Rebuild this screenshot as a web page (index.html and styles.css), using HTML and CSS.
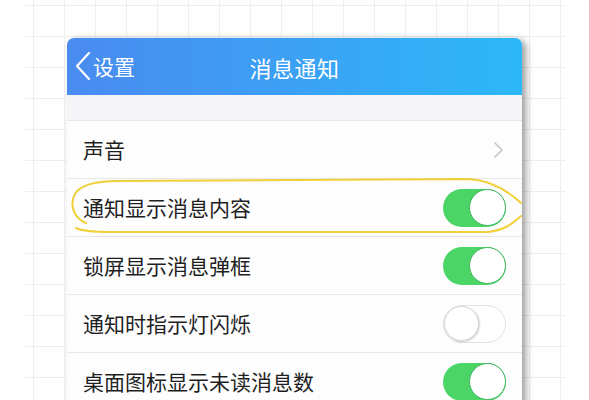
FILE: index.html
```html
<!DOCTYPE html>
<html lang="zh-CN">
<head>
<meta charset="utf-8">
<title>消息通知</title>
<link rel="stylesheet" href="styles.css">
</head>
<body>
<div class="paper">
  <div class="card">
    <div class="header">
      <div class="back">
        <svg class="back-icon" width="16" height="28" viewBox="0 0 16 28"><polyline points="14,1 2,14 14,27" fill="none" stroke="#fff" stroke-width="2.2" stroke-linecap="round" stroke-linejoin="round"/></svg>
        <span class="back-text">设置</span>
      </div>
      <div class="title">消息通知</div>
      <div class="spacer"></div>
    </div>
    <div class="band"></div>
    <div class="row">
      <span class="label">声音</span>
      <svg class="chev" width="9" height="16" viewBox="0 0 9 16"><polyline points="1,1 8,8 1,15" fill="none" stroke="#c4c4c9" stroke-width="1.6" stroke-linecap="round" stroke-linejoin="round"/></svg>
    </div>
    <div class="row">
      <span class="label">通知显示消息内容</span>
      <span class="toggle on"><span class="knob"></span></span>
    </div>
    <div class="row">
      <span class="label">锁屏显示消息弹框</span>
      <span class="toggle on"><span class="knob"></span></span>
    </div>
    <div class="row">
      <span class="label">通知时指示灯闪烁</span>
      <span class="toggle off"><span class="knob"></span></span>
    </div>
    <div class="row">
      <span class="label">桌面图标显示未读消息数</span>
      <span class="toggle on"><span class="knob"></span></span>
    </div>
  </div>
</div>
<svg class="mark" width="589" height="400" viewBox="0 0 589 400">
  <path d="M 86 223 C 74 218, 70 206, 74 196 C 78 186, 92 181, 118 181 L 468 179 C 490 180, 506 189, 521 203 M 521 216 C 512 224, 505 230, 488 232 L 110 232 C 95 232, 82 231, 76 228" fill="none" stroke="#f0d03a" stroke-width="2" stroke-linecap="round" stroke-linejoin="round"/>
</svg>
</body>
</html>
```

FILE: styles.css
```css
html, body {
  margin: 0;
  padding: 0;
  background: #ffffff;
  overflow: hidden;
  height: 400px;
}

body {
  font-family: "Noto Sans CJK SC", "Noto Sans", sans-serif;
}

.paper {
  margin-left: 25px;
  width: 540px;
  height: 400px;
  box-sizing: border-box;
  padding: 38px 0 0 42px;
  background-color: #ffffff;
  background-image:
    linear-gradient(90deg, #eeeeee 1px, transparent 1px),
    linear-gradient(180deg, #eeeeee 1px, transparent 1px);
  background-size: 31px 31px;
  background-position: 8px 0, 0 5px;
}

.card {
  width: 455px;
  background: #fdfdfe;
  border-radius: 7px 7px 0 0;
  box-shadow: 4px 2px 7px rgba(0, 0, 0, 0.38);
}

.header {
  height: 57px;
  border-radius: 7px 7px 0 0;
  background: linear-gradient(90deg, #4a8bf0 0%, #3aa3f5 55%, #2cb8f9 100%);
  display: grid;
  grid-template-columns: 1fr auto 1fr;
  align-items: center;
  color: #ffffff;
}

.back {
  display: flex;
  align-items: center;
  padding-left: 8px;
  gap: 2px;
}

.back-icon {
  display: block;
  margin-top: -1px;
}

.back-text {
  font-size: 21px;
  line-height: 1;
}

.title {
  font-size: 22px;
  line-height: 1;
  letter-spacing: 0.5px;
}

.band {
  height: 25px;
  background: #f5f5f8;
  border-bottom: 1px solid #e6e6e9;
}

.row {
  height: 57px;
  border-bottom: 1px solid #e8e8ea;
  display: flex;
  align-items: center;
  justify-content: space-between;
  padding: 0 16px;
}

.label {
  font-size: 21px;
  color: #1f1f1f;
  line-height: 1;
}

.chev {
  display: block;
  margin-right: 3px;
  margin-top: 1px;
}

.toggle {
  width: 63px;
  height: 38px;
  box-sizing: border-box;
  border-radius: 19px;
  display: flex;
  align-items: center;
}

.toggle.on {
  background: #4cd567;
  justify-content: flex-end;
}

.toggle.off {
  background: #ffffff;
  border: 1.5px solid #e2e2e2;
  justify-content: flex-start;
}

.knob {
  width: 37px;
  height: 37px;
  border-radius: 50%;
  background: #ffffff;
  box-sizing: border-box;
}

.toggle.on .knob {
  border: 1.5px solid #3fb45e;
  margin-right: 0;
}

.toggle.off .knob {
  width: 35px;
  height: 35px;
  border: 1px solid #d6d6d6;
  box-shadow: 1px 1px 2px rgba(0, 0, 0, 0.18);
}

.mark {
  position: absolute;
  left: 0;
  top: 0;
  pointer-events: none;
}
```
